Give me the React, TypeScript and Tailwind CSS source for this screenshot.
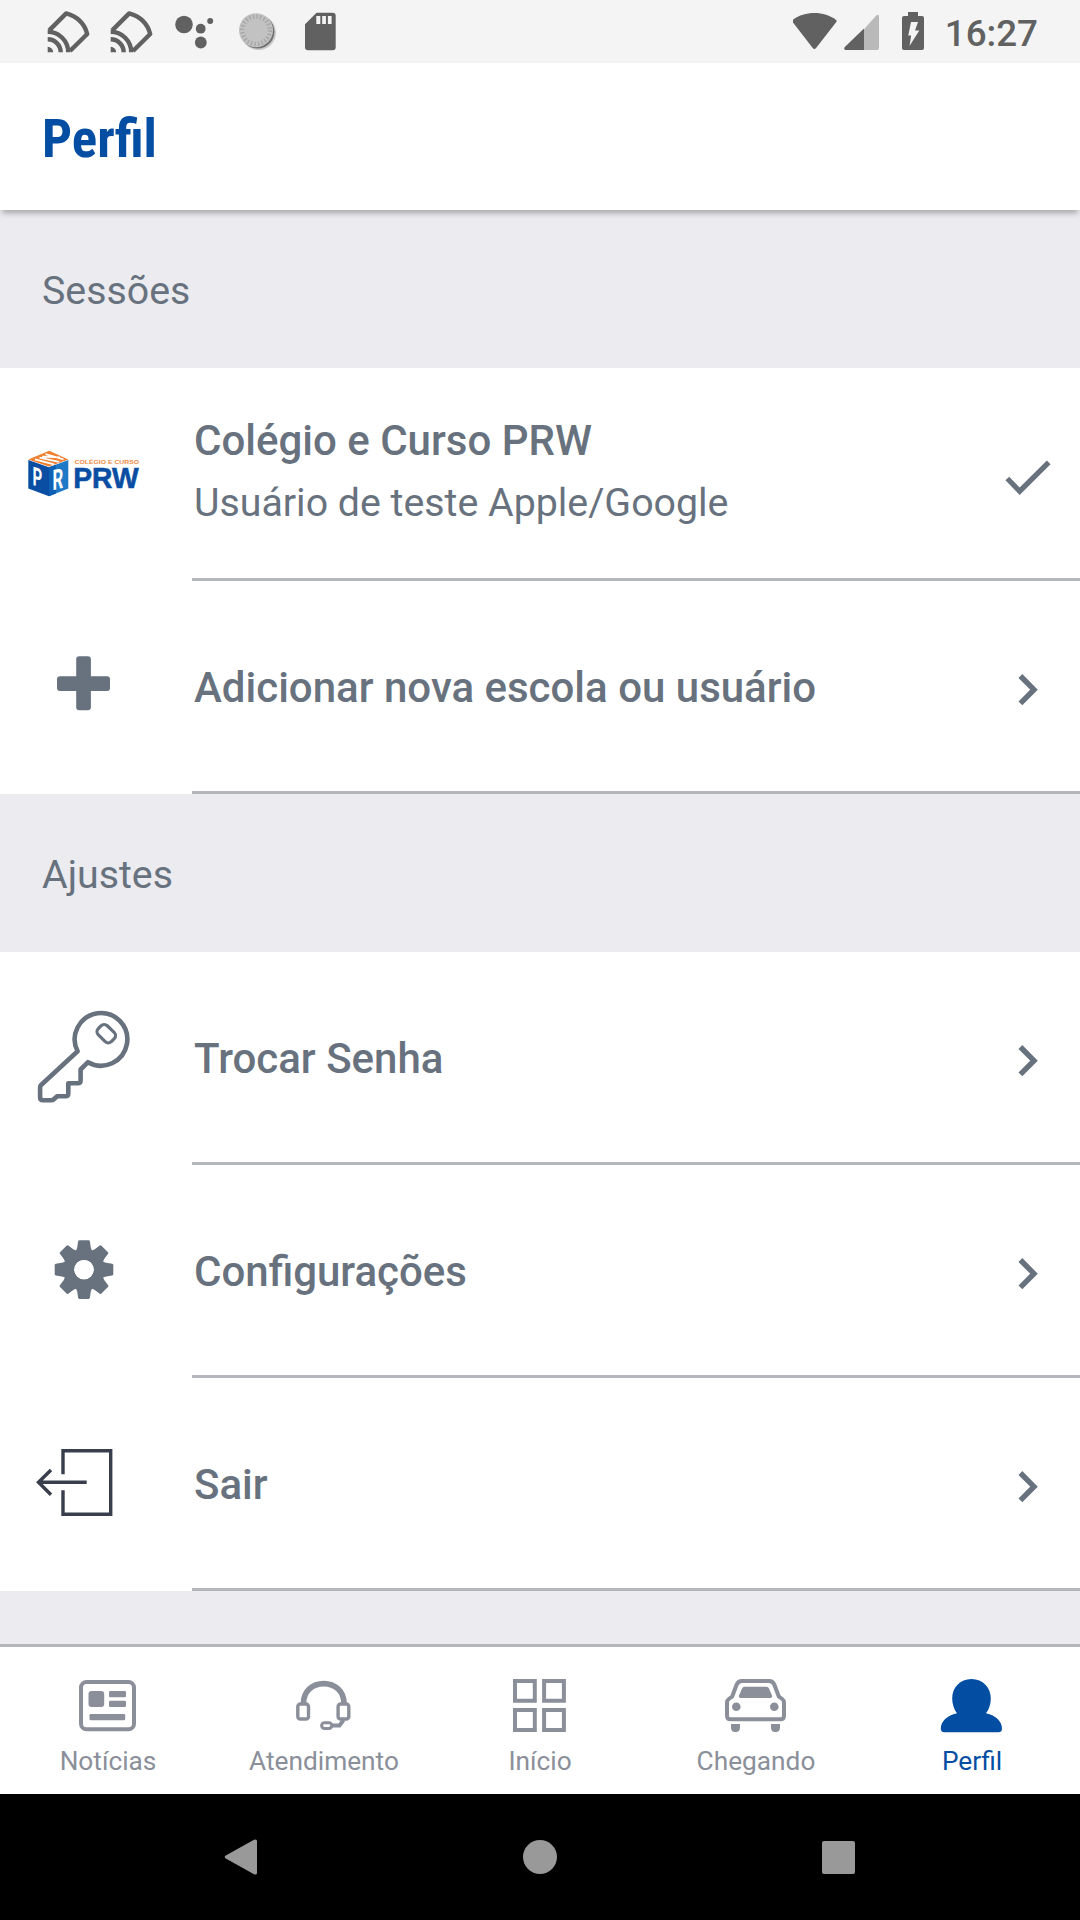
import React from "react";

const CastIcon = () => (
  <svg width="44" height="44" viewBox="0 0 44 44" fill="none" stroke="#616161" strokeWidth="4.4">
    <path
      d="M3.2 20.4L20.2 3.4C31 6.4 38.5 13.6 41.2 24L24 41"
      strokeLinejoin="round"
    />
    <path d="M1.7 21.8A20.5 20.5 0 0 1 22.2 42.3M1.7 29.3A13 13 0 0 1 14.7 42.3" />
    <path d="M1.7 36.8A5.5 5.5 0 0 1 7.2 42.3H1.7z" fill="#616161" stroke="none" />
  </svg>
);

const DotsIcon = () => (
  <svg width="44" height="44" viewBox="0 0 44 44" fill="#616161">
    <circle cx="12" cy="14.5" r="8.8" />
    <circle cx="28.7" cy="18.7" r="4.9" />
    <circle cx="38.2" cy="11.1" r="3" />
    <circle cx="28.8" cy="32.5" r="5.9" />
  </svg>
);

const DialIcon = () => (
  <svg width="44" height="44" viewBox="0 0 44 44">
    <circle cx="23.6" cy="22.6" r="17.4" fill="#c9c9c9" />
    <circle cx="22.6" cy="21.7" r="16.8" fill="#707070" />
    <circle cx="21" cy="20.3" r="17" fill="#c2c2c2" />
    <circle
      cx="21"
      cy="20.3"
      r="13.8"
      fill="none"
      stroke="#a8a8a8"
      strokeWidth="4.4"
      strokeDasharray="1.5 2.11"
    />
  </svg>
);

const SdIcon = () => (
  <svg width="44" height="44" viewBox="0 0 44 44">
    <path
      d="M18.5 2.7H34.7a3 3 0 0 1 3 3V37.3a3 3 0 0 1-3 3H10a3 3 0 0 1-3-3V14.2z"
      fill="#616161"
    />
    <path d="M18.3 6h4v8h-4zM24.2 6h3.7v8h-3.7zM29.9 6h3.7v8h-3.7z" fill="#f4f4f4" />
  </svg>
);

const StatusBar = () => (
  <div className="h-[63px] bg-[#f4f4f4] flex justify-between pl-[46px] pr-[42px]">
    <div className="flex gap-[19px] pt-2.5">
      <CastIcon />
      <CastIcon />
      <DotsIcon />
      <DialIcon />
      <SdIcon />
    </div>
    <div className="flex">
      <svg className="mt-2.5" width="45" height="44" viewBox="0.8 0 45 44" fill="#616161">
        <path d="M.5 9.9C6.6 5.3 14 3 22.2 3s15.6 2.3 21.7 6.9q1 .8.2 2L23.7 38.3q-1.5 1.6-3 0L.3 11.9q-.8-1.2.2-2z" />
      </svg>
      <svg className="mt-2.5 ml-1" width="40" height="44" viewBox="0 0 40 44">
        <path d="M22 19.3L34.5 5.3q2.5-1.5 2.5 1V38q0 2-2 2H22z" fill="#b9b9b9" />
        <path d="M22 18.5V40H4q-3-.5-1.2-3z" fill="#616161" />
      </svg>
      <svg className="mt-2.5 ml-[18px]" width="26" height="44" viewBox="0 0 26 44">
        <path
          d="M8 2h10v4h4a2 2 0 0 1 2 2v30a2 2 0 0 1-2 2H4a2 2 0 0 1-2-2V8a2 2 0 0 1 2-2h4z"
          fill="#616161"
        />
        <path d="M11 12h7l-3 8.5h4.3L9.5 36l1.7-10.5H8.3z" fill="#f4f4f4" />
      </svg>
      <span className="ml-[19px] pt-[3px] text-[36.75px] leading-[61px] font-medium text-[#616161]">
        16:27
      </span>
    </div>
  </div>
);

const SchoolLogo = () => (
  <svg width="120" height="120" viewBox="0 0 120 120">
    <path d="M25.2 37.8L44.3 46.5 25 53.5 4.3 46.5z" fill="#f07f2e" />
    <path d="M4.3 47L25 54.3V83.3L4.3 75.5z" fill="#0a4ea3" />
    <path d="M25 54.3L44.3 47V75.5L25 83.3z" fill="#2079c7" />
    <path d="M25 54.3L32 51.8V80.5L25 83.3z" fill="#0f60b2" />
    <path
      d="M11 46.4L30 51.4M15.5 44.6L35 48.8M18 43.6L36 44.4M21.5 41.2L39.5 46.4"
      stroke="#fff"
      strokeWidth="1.8"
    />
    <g fill="#fff" fontFamily="Roboto, sans-serif" fontWeight="700">
      <text transform="matrix(.58 .16 0 1 8.6 72)" fontSize="26">
        P
      </text>
      <text transform="matrix(.6 -.14 0 1 28.4 77.3)" fontSize="28">
        R
      </text>
    </g>
    <g fontFamily="'Liberation Sans', Arial, sans-serif" fontWeight="700">
      <text
        x="50.6"
        y="50.8"
        fontSize="5.7"
        fill="#ee8a45"
        textLength="64.5"
        lengthAdjust="spacingAndGlyphs"
      >
        COLÉGIO E CURSO
      </text>
      <text
        x="49.3"
        y="74.7"
        fontSize="30"
        fill="#0a4ea3"
        stroke="#0a4ea3"
        strokeWidth=".6"
        textLength="65.3"
        lengthAdjust="spacingAndGlyphs"
      >
        PRW
      </text>
    </g>
  </svg>
);

const PlusIcon = () => (
  <svg width="120" height="120" viewBox="0 0 120 120" fill="#68727e">
    <rect x="33" y="50.2" width="53" height="14.7" rx="3" />
    <rect x="52.2" y="30.2" width="14.7" height="54" rx="3" />
  </svg>
);

const KeyIcon = () => (
  <svg
    width="120"
    height="120"
    viewBox="0.4 0 120 120"
    fill="none"
    stroke="#68727e"
    strokeWidth="4.6"
    strokeLinejoin="round"
  >
    <path d="M54 54.3A26.3 26.3 0 1 1 64.4 65.2L57 72.5V83.5Q57 86.3 54.3 86.3H44.7V96.5Q44.7 99.3 42 99.3H33.5L30.5 102Q29.3 103.2 27.5 103.2H19.5Q16.5 103.2 16.5 100.2V90.5Q16.5 89 17.5 88z" />
    <rect
      x="73.4"
      y="30.3"
      width="18.5"
      height="12.8"
      rx="4.5"
      transform="rotate(44 82.7 36.7)"
      strokeWidth="3.2"
    />
  </svg>
);

const GearIcon = () => (
  <svg width="120" height="120" viewBox="0 0 120 120" fill="#68727e">
    <g transform="translate(60 59.6)">
      {[0, 45, 90, 135, 180, 225, 270, 315].map((deg) => (
        <path
          key={deg}
          d="M-9 -17.5Q-7.2 -20 -6.8 -22L-5.9 -28.2Q-5.7 -29.3 -4.6 -29.3H4.6Q5.7 -29.3 5.9 -28.2L6.8 -22Q7.2 -20 9 -17.5z"
          transform={`rotate(${deg})`}
        />
      ))}
      <circle r="15" fill="none" stroke="#68727e" strokeWidth="10.6" />
      <circle r="9.7" fill="#fff" />
    </g>
  </svg>
);

const ExitIcon = () => (
  <svg
    width="120"
    height="120"
    viewBox="0 0 120 120"
    fill="none"
    stroke="#383e4c"
    strokeWidth="3.4"
  >
    <path d="M39 51.3V27.7H86.7V91.3H39V67.3M62.7 59.3H14.5M27 47L14.5 59.3L27 71.7" />
  </svg>
);

const Chevron = () => (
  <svg
    className="mr-8 mt-[7px]"
    width="40"
    height="40"
    viewBox="0.6 0.3 40 40"
    fill="none"
    stroke="#68727e"
    strokeWidth="5.4"
  >
    <path d="M13 6.3L26.6 20L13 33.7" />
  </svg>
);

const Check = () => (
  <svg
    className="mr-6 mt-[9px]"
    width="56"
    height="56"
    viewBox="0 0 56 56"
    fill="none"
    stroke="#68727e"
    strokeWidth="5.2"
  >
    <path d="M7.3 28.5L19.7 41.2L48.7 12.3" />
  </svg>
);

const SectionHeader = ({ children }: { children: React.ReactNode }) => (
  <h2 className="h-[158px] bg-[#ebebf0] pl-[42px] text-[39.3px] leading-[162px] text-[#68727e]">
    {children}
  </h2>
);

type RowProps = {
  icon: React.ReactNode;
  title: string;
  subtitle?: string;
  checked?: boolean;
};

const Row = ({ icon, title, subtitle, checked }: RowProps) => (
  <div className="h-[213px] bg-white flex text-[#68727e]">
    <div className="w-[192px] shrink-0 pl-6 pt-[45px]">{icon}</div>
    <div className="flex-1 flex items-center justify-between border-b-[3px] border-[#b3b7bc] pl-[2px]">
      <div className={subtitle ? "pb-[3px]" : "pt-[3px]"}>
        <p className="text-[42px] leading-[62px] font-medium">{title}</p>
        {subtitle && <p className="text-[39.3px] leading-[62px]">{subtitle}</p>}
      </div>
      {checked ? <Check /> : <Chevron />}
    </div>
  </div>
);

const NewsIcon = () => (
  <svg width="64" height="64" viewBox="0 0 64 64" fill="#8a8f99">
    <rect x="5" y="8" width="53" height="47.3" rx="5.5" fill="none" stroke="#8a8f99" strokeWidth="4" />
    <rect x="12.5" y="17" width="15.7" height="16" rx="3" />
    <rect x="33" y="17" width="17" height="6.3" rx="1.3" />
    <rect x="33" y="26.7" width="17" height="6.3" rx="1.3" />
    <rect x="13.5" y="40" width="35.7" height="6.3" rx="1.3" />
  </svg>
);

const HeadsetIcon = () => (
  <svg width="64" height="64" viewBox="0 0 64 64" fill="none" stroke="#8a8f99" strokeWidth="3.4">
    <path d="M11.5 29.5C11.5 17 20.5 9.6 31.7 9.6S52 17 52 29.5" strokeWidth="5.6" />
    <rect x="5.8" y="30" width="10.7" height="15" rx="2.6" fill="#fff" />
    <rect x="46.1" y="30" width="10.7" height="15" rx="2.6" fill="#fff" />
    <path d="M51.5 46L47.5 51.6H40" strokeWidth="4" />
    <rect x="29.6" y="48.7" width="10.2" height="5.8" rx="2.9" strokeWidth="3" />
  </svg>
);

const GridIcon = () => (
  <svg width="64" height="64" viewBox="0 0 64 64" fill="none" stroke="#8a8f99" strokeWidth="4">
    <path d="M7 7h19.8v19.8H7zM36.1 7h19.8v19.8H36.1zM7 36h19.8v20H7zM36.1 36h19.8v20H36.1z" />
  </svg>
);

const CarIcon = () => (
  <svg width="64" height="64" viewBox="0 0 64 64" fill="#8a8f99">
    <path
      d="M3 28.5V41.8Q3 45.3 6.5 45.3H56.5Q60 45.3 60 41.8V28.5Q60 26.3 58.2 25L54.8 22.5L50.5 11Q49 7 45 7H18Q14 7 12.5 11L8.2 22.5L4.8 25Q3 26.3 3 28.5z"
      fill="none"
      stroke="#8a8f99"
      strokeWidth="4"
    />
    <path d="M20.5 12.7H42.5Q44.3 12.7 45 14.5L48 21.5Q48.7 24 46.5 24H16.5Q14.3 24 15 21.5L18 14.5Q18.7 12.7 20.5 12.7z" />
    <circle cx="12.3" cy="32.7" r="4.3" />
    <circle cx="50.3" cy="32.7" r="4.3" />
    <path d="M7 50h9v3.5q0 4.5-4.5 4.5T7 53.5zM47 50h9v3.5q0 4.5-4.5 4.5T47 53.5z" />
  </svg>
);

const PersonIcon = () => (
  <svg width="64" height="64" viewBox="0 0 64 64" fill="#034ea2">
    <path d="M31.5 5C43 5 50.8 13.5 50.8 24.5C50.8 30 49 35.5 46 39.3C56 41.5 62 47.5 62 54.8Q62 58.2 58.5 58.2H4.3Q.8 58.2 .8 54.8C.8 47.5 7 41.5 17 39.3C14 35.5 12.2 30 12.2 24.5C12.2 13.5 20 5 31.5 5z" />
  </svg>
);

const tabs = [
  { label: "Notícias", icon: <NewsIcon /> },
  { label: "Atendimento", icon: <HeadsetIcon /> },
  { label: "Início", icon: <GridIcon /> },
  { label: "Chegando", icon: <CarIcon /> },
  { label: "Perfil", icon: <PersonIcon />, active: true },
];

const TabBar = () => (
  <nav className="h-[150px] bg-white border-t-[3px] border-[#b3b7bc] flex pt-[27px]">
    {tabs.map(({ label, icon, active }) => (
      <div key={label} className="flex-1 flex flex-col items-center gap-2">
        {icon}
        <span
          className={
            active
              ? "text-[26.25px] leading-[30px] text-[#034ea2]"
              : "text-[26.25px] leading-[30px] text-[#8a8f99]"
          }
        >
          {label}
        </span>
      </div>
    ))}
  </nav>
);

const SystemNav = () => (
  <div className="h-[126px] bg-black flex justify-center items-center pr-px">
    <div className="w-[299px] flex justify-center">
      <svg width="36" height="36" viewBox="0 0 36 36" fill="#999">
        <path d="M2.8 16.6L31 .8q3-1.3 3 1.5V33.7q0 2.8-3 1.5L2.8 19.4q-2.2-1.4 0-2.8z" />
      </svg>
    </div>
    <div className="w-[299px] flex justify-center">
      <div className="size-[34px] rounded-full bg-[#999]" />
    </div>
    <div className="w-[299px] flex justify-center">
      <div className="size-[33px] rounded-[2px] bg-[#999]" />
    </div>
  </div>
);

export default function App() {
  return (
    <div className="w-[1080px] h-[1920px] overflow-hidden flex flex-col bg-[#ebebf0] font-[Roboto,sans-serif]">
      <StatusBar />
      <header className="relative h-[147px] shrink-0 bg-white pl-[42px] shadow-[0_5px_6px_-2px_rgba(0,0,0,0.3)]">
        <h1 className="text-[53px] leading-[152px] font-bold [font-stretch:condensed] text-[#034ea2]">
          Perfil
        </h1>
      </header>
      <main className="flex-1">
        <SectionHeader>Sessões</SectionHeader>
        <Row
          icon={<SchoolLogo />}
          title="Colégio e Curso PRW"
          subtitle="Usuário de teste Apple/Google"
          checked
        />
        <Row icon={<PlusIcon />} title="Adicionar nova escola ou usuário" />
        <SectionHeader>Ajustes</SectionHeader>
        <Row icon={<KeyIcon />} title="Trocar Senha" />
        <Row icon={<GearIcon />} title="Configurações" />
        <Row icon={<ExitIcon />} title="Sair" />
      </main>
      <TabBar />
      <SystemNav />
    </div>
  );
}
